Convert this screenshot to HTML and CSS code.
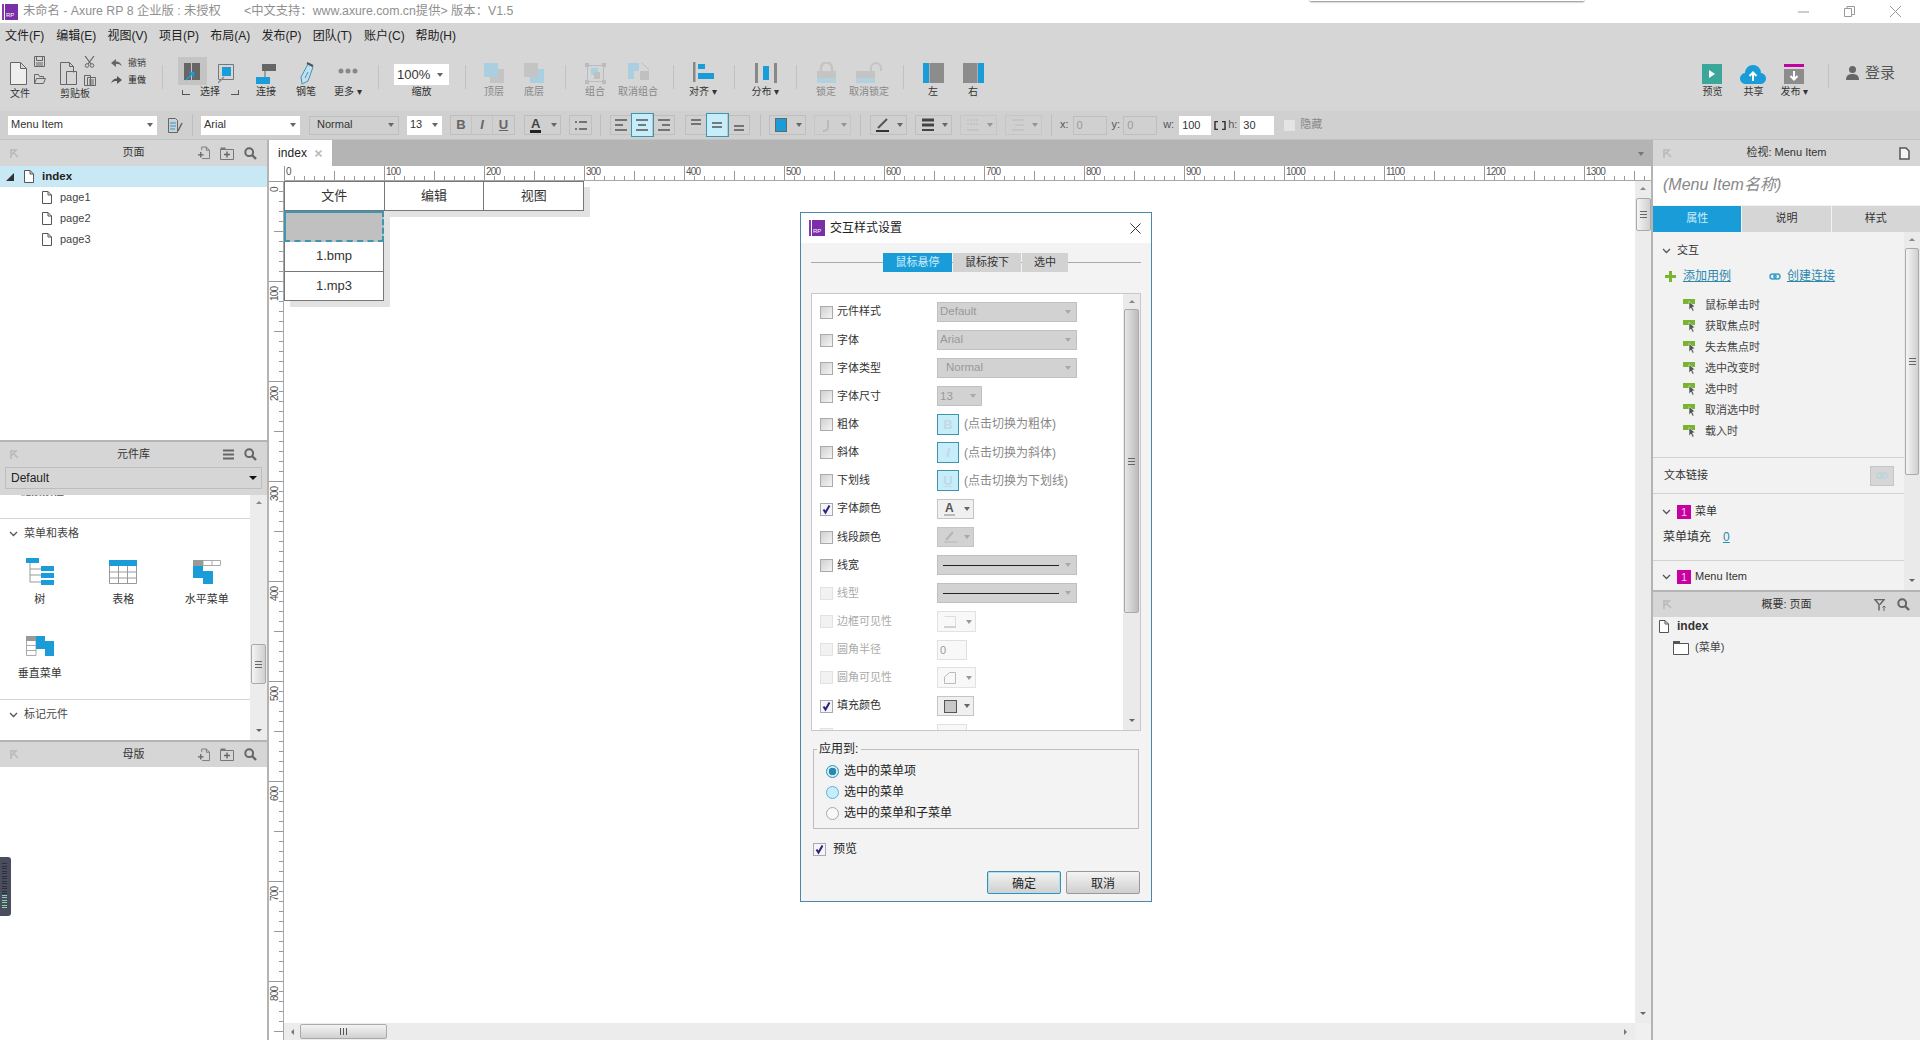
FILE: index.html
```html
<!DOCTYPE html>
<html lang="zh">
<head>
<meta charset="utf-8">
<title>Axure RP 8</title>
<link rel="stylesheet" href="styles.css">
</head>
<body>
<svg class="defs" width="0" height="0">
  <symbol id="page" viewBox="0 0 10 13"><path d="M.5.5h5.5l3.500 3.500v8.500h-9z M6 .5v3.500h3.500" fill="#fff" stroke="#555"/></symbol>
  <symbol id="search" viewBox="0 0 13 13"><circle cx="5.200" cy="5.200" r="3.900" fill="none" stroke="#666" stroke-width="2"/><path d="M8 8l4 4" stroke="#666" stroke-width="2.400"/></symbol>
  <symbol id="addpage" viewBox="0 0 13 14"><path d="M4 4V.5h5l3.500 3.500v9h-8" fill="none" stroke="#777"/><path d="M9 .5V4h3.500" fill="none" stroke="#777"/><path d="M0 9h6M3 6v6" stroke="#666" stroke-width="1.400"/></symbol>
  <symbol id="addfolder" viewBox="0 0 14 13"><path d="M.5 2.500h13v10H.5z" fill="none" stroke="#777"/><path d="M.5.500h5v2h-5z" fill="#777"/><path d="M4 7.500h6M7 4.500v6" stroke="#666" stroke-width="1.400"/></symbol>
  <symbol id="back" viewBox="0 0 9 9"><path d="M1 0v9M1 1h5L1 6M3 3l5 5" fill="none" stroke="#bbb" stroke-width="1.700"/></symbol>
  <symbol id="chev" viewBox="0 0 9 6"><path d="M1 1l3.500 3.500L8 1" fill="none" stroke="#555" stroke-width="1.300"/></symbol>
  <symbol id="flag" viewBox="0 0 13 13"><path d="M0 0h12v5H0z" fill="#79b530"/><path d="M0 0h4l2 3z" fill="#79b530"/><path d="M6 2.500l6 5-2.500.5 1.500 3.500-1.500.8L8 9l-2 2z" fill="#555" stroke="#f2f2f2" stroke-width=".6"/></symbol>
  <symbol id="tick" viewBox="0 0 11 11"><path d="M2.500 5.500l2 3 4-7" fill="none" stroke="#2b2470" stroke-width="2"/></symbol>
  <symbol id="rp" viewBox="0 0 16 16"><rect x="0" width="2" height="16" fill="#8a3ab0"/><rect x="3" width="13" height="16" fill="#7a2fa6"/><text x="4" y="13" font-size="6" fill="#fff" font-family="Liberation Sans">RP</text></symbol>
</svg>

<div class="app">
  <header class="titlebar">
    <svg class="title-logo" width="16" height="16"><use href="#rp"/></svg>
    <span class="title-a">未命名 - Axure RP 8 企业版 : 未授权</span>
    <span class="title-b">&lt;中文支持：www.axure.com.cn提供&gt; 版本：V1.5</span>
    <div class="winbtns">
      <svg width="11" height="11" viewBox="0 0 11 11"><path d="M0 6h11" stroke="#999"/></svg>
      <svg width="11" height="11" viewBox="0 0 11 11"><path d="M.5 2.500h7v8h-7zM3 2.500V.5h7.500v8H8" fill="none" stroke="#999"/></svg>
      <svg width="11" height="11" viewBox="0 0 11 11"><path d="M0 0l11 11M11 0L0 11" stroke="#999"/></svg>
    </div>
  </header>

  <nav class="menubar">
    <span>文件(F)</span><span>编辑(E)</span><span>视图(V)</span><span>项目(P)</span><span>布局(A)</span><span>发布(P)</span><span>团队(T)</span><span>账户(C)</span><span>帮助(H)</span>
  </nav>

  <div class="toolbar">
    <div class="tg tg-file">
      <div class="tg-icons">
        <svg width="17" height="23" viewBox="0 0 17 23"><path d="M.5.5h10l6 6v16H.5z M10.500.5v6h6" fill="#eee" stroke="#666"/></svg>
        <div class="tg-stack">
          <svg width="11" height="11" viewBox="0 0 11 11"><path d="M.5.5h10v10H.5z" fill="none" stroke="#666"/><path d="M2.500.5h6v4h-6zM2 7h7M2 9h7" fill="none" stroke="#666"/></svg>
          <svg width="12" height="10" viewBox="0 0 12 10"><path d="M.5 9.500V.5h4l1 2h4v2M.5 9.500l2-5h9l-2 5z" fill="none" stroke="#666"/></svg>
        </div>
      </div>
      <div class="tlabel tlabel-left">文件</div>
    </div>
    <div class="tg tg-clip">
      <div class="tg-icons">
        <svg width="17" height="23" viewBox="0 0 17 23"><path d="M.5.5h9l4 4v6M.5.5v22h6" fill="none" stroke="#666"/><path d="M9.500.5v4h4M6.500 9.500h10v13h-10z" fill="none" stroke="#666"/></svg>
        <div class="tg-stack tg-stack-clip">
          <svg width="11" height="12" viewBox="0 0 11 12"><path d="M1 0l6 8M10 0L4 8" stroke="#666" stroke-width="1.200"/><circle cx="3" cy="9.500" r="1.800" fill="none" stroke="#666"/><circle cx="8" cy="9.500" r="1.800" fill="none" stroke="#666"/></svg>
          <svg width="12" height="11" viewBox="0 0 12 11"><path d="M.5.5h6v10h-6zM3.500 2.500h8v8h-8zM5 5h5M5 7h5M5 9h5" fill="#d6d6d6" stroke="#666"/></svg>
        </div>
      </div>
      <div class="tlabel tlabel-left">剪贴板</div>
    </div>
    <div class="undo">
      <div class="undo-row"><svg width="11" height="9" viewBox="0 0 11 9"><path d="M0 4l5-4v2.500c3 0 5 1.500 6 5-1.500-2-3-2.500-6-2.500V8z" fill="#666"/></svg><span>撤销</span></div>
      <div class="undo-row"><svg width="11" height="9" viewBox="0 0 11 9"><path d="M11 4L6 0v2.500c-3 0-5 1.500-6 5 1.500-2 3-2.500 6-2.500V8z" fill="#555"/></svg><span class="undo-on">重做</span></div>
    </div>
    <i class="sep sep-a"></i>
    <div class="tool-select">
      <div class="sel-icons">
        <span class="sel-on"><svg width="17" height="20" viewBox="0 0 17 20"><path d="M0 0h7v17H0zM8 0h8v17H8z" fill="#666"/><path d="M2 17l7-7M5 9.500h4.500V14" fill="none" stroke="#1a9cd8" stroke-width="1.500"/></svg></span>
        <svg class="sel-two" width="17" height="20" viewBox="0 0 17 20"><path d="M.5.5h15v15H.5z" fill="#d6d6d6" stroke="#777"/><path d="M4 3h9v9H4z" fill="#1a9cd8"/><path d="M0 19l6-6" stroke="#888" stroke-width="1.500"/></svg>
      </div>
      <div class="sel-label"><i class="br-l"></i><span>选择</span><i class="br-r"></i></div>
    </div>
    <div class="tool tool-connect">
      <svg class="ticon" width="20" height="24" viewBox="0 0 20 24"><path d="M6 2h14v7H6z" fill="#666"/><path d="M0 15h14v7H0z" fill="#1a9cd8"/><path d="M9 9v6" stroke="#666"/></svg>
      <div class="tlabel">连接</div>
    </div>
    <div class="tool">
      <svg class="ticon" width="16" height="24" viewBox="0 0 16 24"><path d="M10 2l5 3-5 14-6 3-1-7z" fill="#bfe2f2" stroke="#4a90b0"/><path d="M7 16l3-6" stroke="#4a90b0"/><path d="M9 1l6 3" stroke="#555" stroke-width="2"/></svg>
      <div class="tlabel">钢笔</div>
    </div>
    <div class="tool tool-more">
      <svg class="ticon" width="20" height="24" viewBox="0 0 20 24"><circle cx="3" cy="9" r="2.500" fill="#888"/><circle cx="10" cy="9" r="2.500" fill="#888"/><circle cx="17" cy="9" r="2.500" fill="#888"/></svg>
      <div class="tlabel">更多 ▾</div>
    </div>
    <i class="sep sep-b"></i>
    <div class="tool tool-zoom">
      <div class="zoombox"><span>100%</span><i class="caret"></i></div>
      <div class="tlabel">缩放</div>
    </div>
    <i class="sep sep-c"></i>
    <div class="tool tool-off">
      <svg class="ticon" width="20" height="24" viewBox="0 0 20 24"><path d="M6 7h14v14H6z" fill="#c4c4c4"/><path d="M0 1h14v14H0z" fill="#a9cfe0"/></svg>
      <div class="tlabel">顶层</div>
    </div>
    <div class="tool tool-off">
      <svg class="ticon" width="20" height="24" viewBox="0 0 20 24"><path d="M6 7h14v14H6z" fill="#a9cfe0"/><path d="M0 1h14v14H0z" fill="#c4c4c4"/></svg>
      <div class="tlabel">底层</div>
    </div>
    <i class="sep"></i>
    <div class="tool tool-off">
      <svg class="ticon" width="21" height="24" viewBox="0 0 21 24"><path d="M2.500 3.500h16v16h-16z" fill="none" stroke="#bbb"/><path d="M0 1h4v4H0zM17 1h4v4h-4zM0 18h4v4H0zM17 18h4v4h-4z" fill="#bbb"/><path d="M6 6h7v7H6z" fill="#a9cfe0"/><path d="M9 10h6v7H9z" fill="#c0c0c0"/></svg>
      <div class="tlabel">组合</div>
    </div>
    <div class="tool tool-wide tool-off">
      <svg class="ticon" width="21" height="24" viewBox="0 0 21 24"><path d="M0 1h11v8H6v8H0z" fill="#a9cfe0"/><path d="M12 9h9v9h-9z" fill="#c0c0c0"/><path d="M14 1l7 7" stroke="#bbb"/></svg>
      <div class="tlabel">取消组合</div>
    </div>
    <i class="sep sep-d"></i>
    <div class="tool">
      <svg class="ticon" width="21" height="24" viewBox="0 0 21 24"><path d="M0 0h2.500v20H0z" fill="#888"/><path d="M5 2h7v5H5z" fill="#1a9cd8"/><path d="M5 11h16v6H5z" fill="#1a9cd8"/></svg>
      <div class="tlabel">对齐 ▾</div>
    </div>
    <i class="sep"></i>
    <div class="tool tool-dist">
      <svg class="ticon" width="22" height="24" viewBox="0 0 22 24"><path d="M0 1h3v20H0zM19 1h3v20h-3z" fill="#888"/><path d="M8 4h6v14H8z" fill="#1a9cd8"/></svg>
      <div class="tlabel">分布 ▾</div>
    </div>
    <i class="sep"></i>
    <div class="tool tool-off">
      <svg class="ticon" width="19" height="24" viewBox="0 0 19 24"><path d="M4 9V6a5.500 5.500 0 0 1 11 0v3" fill="none" stroke="#c4c4c4" stroke-width="2.500"/><path d="M0 9h19v7H0z" fill="#c4c4c4"/><path d="M0 16h19v5H0z" fill="#b3d0dd"/></svg>
      <div class="tlabel">锁定</div>
    </div>
    <div class="tool tool-wide tool-off">
      <svg class="ticon" width="26" height="24" viewBox="0 0 26 24"><path d="M15 9V6a5 5 0 0 1 10 0v3" fill="none" stroke="#c4c4c4" stroke-width="2"/><path d="M0 9h19v7H0z" fill="#c4c4c4"/><path d="M0 16h19v5H0z" fill="#b3d0dd"/></svg>
      <div class="tlabel">取消锁定</div>
    </div>
    <i class="sep"></i>
    <div class="tool">
      <svg class="ticon" width="21" height="24" viewBox="0 0 21 24"><path d="M0 1h6v20H0z" fill="#1a9cd8"/><path d="M6.500 1H21v20H6.500z" fill="#8c8c8c"/></svg>
      <div class="tlabel">左</div>
    </div>
    <div class="tool">
      <svg class="ticon" width="21" height="24" viewBox="0 0 21 24"><path d="M15 1h6v20h-6z" fill="#1a9cd8"/><path d="M0 1h14.500v20H0z" fill="#8c8c8c"/></svg>
      <div class="tlabel">右</div>
    </div>
    <div class="tb-right">
      <div class="tool">
        <svg class="ticon" width="20" height="24" viewBox="0 0 20 24"><path d="M0 2h20v20H0z" fill="#3aa79a"/><path d="M7 8l6 4-6 4z" fill="#fff"/></svg>
        <div class="tlabel">预览</div>
      </div>
      <div class="tool">
        <svg class="ticon" width="26" height="24" viewBox="0 0 26 24"><path d="M6 22a5.500 5.500 0 0 1-1-11 8 8 0 0 1 16 0 5.500 5.500 0 0 1-1 11z" fill="#1a9cd8"/><path d="M13 19v-8M9.500 14l3.500-3.500 3.500 3.500" fill="none" stroke="#fff" stroke-width="2"/></svg>
        <div class="tlabel">共享</div>
      </div>
      <div class="tool">
        <svg class="ticon" width="20" height="24" viewBox="0 0 20 24"><path d="M0 2h20v3H0z" fill="#c300a0"/><path d="M0 7h20v15H0z" fill="#8c8c8c"/><path d="M10 9v8M6.500 14l3.500 3.500 3.500-3.500" fill="none" stroke="#fff" stroke-width="2"/></svg>
        <div class="tlabel">发布 ▾</div>
      </div>
      <i class="sep sep-e"></i>
      <div class="login">
        <svg width="13" height="14" viewBox="0 0 13 14"><circle cx="6.500" cy="3.500" r="3.500" fill="#666"/><path d="M0 14c0-4 2-6 6.500-6s6.500 2 6.500 6z" fill="#666"/></svg>
        <span>登录</span>
      </div>
    </div>
  </div>

  <div class="formatbar">
    <div class="fld f-name"><span>Menu Item</span><i class="caret"></i></div>
    <svg class="f-paint" width="15" height="15" viewBox="0 0 15 15"><path d="M.5.5h7l2 2v12h-9z" fill="none" stroke="#666"/><path d="M2 5h6M2 8h6M2 11h5" stroke="#1a9cd8"/><path d="M10 13l4-8" stroke="#666" stroke-width="1.500"/></svg>
    <i class="fsep f-s1"></i>
    <div class="fld f-font"><span>Arial</span><i class="caret"></i></div>
    <div class="fld fld-off f-type"><span>Normal</span><i class="caret"></i></div>
    <div class="fld f-size"><span>13</span><i class="caret"></i></div>
    <div class="bgroup f-biu"><b class="fb">B</b><em class="fb fb-i">I</em><u class="fb fb-u">U</u></div>
    <div class="fb-drop f-color"><span class="a-under">A</span><i class="caret"></i></div>
    <div class="bgroup f-list"><span class="fb"><svg width="12" height="9" viewBox="0 0 12 9"><path d="M0 1h2M4 1h8M0 8h2M4 8h8" stroke="#555" stroke-width="1.600"/></svg></span></div>
    <i class="fsep f-s2"></i>
    <div class="bgroup f-align">
      <span class="fb"><svg width="12" height="12" viewBox="0 0 12 12"><path d="M0 1h12M0 6h8M0 11h12" stroke="#555" stroke-width="1.500"/></svg></span>
      <span class="fb fb-on"><svg width="12" height="12" viewBox="0 0 12 12"><path d="M0 1h12M2 6h8M0 11h12" stroke="#555" stroke-width="1.500"/></svg></span>
      <span class="fb"><svg width="12" height="12" viewBox="0 0 12 12"><path d="M0 1h12M4 6h8M0 11h12" stroke="#555" stroke-width="1.500"/></svg></span>
    </div>
    <div class="bgroup f-valign">
      <span class="fb"><svg width="12" height="12" viewBox="0 0 12 12"><path d="M1 1h10M1 5h10" stroke="#555" stroke-width="1.500"/></svg></span>
      <span class="fb fb-on"><svg width="12" height="12" viewBox="0 0 12 12"><path d="M1 4h10M1 8h10" stroke="#555" stroke-width="1.500"/></svg></span>
      <span class="fb"><svg width="12" height="12" viewBox="0 0 12 12"><path d="M1 7h10M1 11h10" stroke="#555" stroke-width="1.500"/></svg></span>
    </div>
    <i class="fsep f-s3"></i>
    <div class="fb-drop f-fill"><span class="swatch"></span><i class="caret"></i></div>
    <div class="fb-drop fb-dim f-next"><svg width="12" height="13" viewBox="0 0 12 13"><path d="M8 1v7c0 3-2 4-5 4" fill="none" stroke="#aaa" stroke-width="2"/></svg><i class="caret"></i></div>
    <i class="fsep"></i>
    <div class="fb-drop f-line"><svg width="14" height="14" viewBox="0 0 14 14"><path d="M2 10L11 1" stroke="#555" stroke-width="2"/><path d="M0 13h13" stroke="#333" stroke-width="2"/></svg><i class="caret"></i></div>
    <div class="fb-drop f-next"><svg width="14" height="14" viewBox="0 0 14 14"><path d="M1 2h12M1 7h12" stroke="#444" stroke-width="3"/><path d="M1 12h12" stroke="#444" stroke-width="2"/></svg><i class="caret"></i></div>
    <div class="fb-drop fb-dim f-next"><svg width="14" height="14" viewBox="0 0 14 14"><path d="M1 2h12M1 6h12" stroke="#aaa" stroke-dasharray="2 1"/><path d="M1 12h12" stroke="#aaa"/></svg><i class="caret"></i></div>
    <div class="fb-drop fb-dim f-next"><svg width="14" height="14" viewBox="0 0 14 14"><path d="M1 2h12M4 7h9M1 12h12" stroke="#aaa"/></svg><i class="caret"></i></div>
    <i class="fsep f-s4"></i>
    <span class="coord c-x">x:</span><span class="cin cin-off c-xv">0</span>
    <span class="coord c-y">y:</span><span class="cin cin-off c-yv">0</span>
    <span class="coord c-w">w:</span><span class="cin c-wv">100</span>
    <svg class="c-lock" width="12" height="9" viewBox="0 0 12 9"><path d="M4 .5H1v8h3M8 .5h3v8H8" fill="none" stroke="#333" stroke-width="1.500"/></svg>
    <span class="coord c-h">h:</span><span class="cin c-hv">30</span>
    <i class="hide-box"></i><span class="hide-text">隐藏</span>
  </div>

  <div class="main">
    <aside class="left">
      <section class="p-pages">
        <div class="phead">
          <svg class="pback" width="9" height="9"><use href="#back"/></svg>
          <span class="ptitle">页面</span>
          <div class="picons">
            <svg width="12" height="14"><use href="#addpage"/></svg>
            <svg width="14" height="13"><use href="#addfolder"/></svg>
            <svg width="13" height="13"><use href="#search"/></svg>
          </div>
        </div>
        <div class="tree">
          <div class="tree-row tree-sel"><i class="tri"></i><svg width="10" height="13"><use href="#page"/></svg><b>index</b></div>
          <div class="tree-row tree-sub"><svg width="10" height="13"><use href="#page"/></svg><span>page1</span></div>
          <div class="tree-row tree-sub"><svg width="10" height="13"><use href="#page"/></svg><span>page2</span></div>
          <div class="tree-row tree-sub"><svg width="10" height="13"><use href="#page"/></svg><span>page3</span></div>
        </div>
      </section>
      <section class="p-lib">
        <div class="phead phead-lib">
          <svg class="pback" width="9" height="9"><use href="#back"/></svg>
          <span class="ptitle">元件库</span>
          <div class="picons">
            <svg width="11" height="11" viewBox="0 0 11 11"><path d="M0 1.500h11M0 5.500h11M0 9.500h11" stroke="#666" stroke-width="2"/></svg>
            <svg width="13" height="13"><use href="#search"/></svg>
          </div>
        </div>
        <div class="lib-select"><div class="lib-drop"><span>Default</span><i class="caret caret-dark"></i></div></div>
        <div class="lib-body">
          <div class="lib-list">
            <div class="lib-clip"><span>链接按钮</span></div>
            <div class="lib-head"><svg width="9" height="6"><use href="#chev"/></svg><span>菜单和表格</span></div>
            <div class="lib-grid">
              <div class="lib-item">
                <svg width="28" height="28" viewBox="0 0 28 28"><path d="M4 5v19h11M4 11h11M4 17h11" fill="none" stroke="#999"/><path d="M0 0h13v5H0zM15 8h13v5H15zM15 15h13v5H15zM15 22h13v5H15z" fill="#1a9cd8"/></svg>
                <span>树</span>
              </div>
              <div class="lib-item">
                <svg width="28" height="24" viewBox="0 0 28 24"><path d="M.5.5h27v23H.5zM.5 12h27M.5 18h27M9.500 6v18M18.500 6v18" fill="#fff" stroke="#999"/><path d="M0 0h28v6H0z" fill="#1a9cd8"/></svg>
                <span>表格</span>
              </div>
              <div class="lib-item">
                <svg width="28" height="24" viewBox="0 0 28 24"><path d="M10 .5h17.500v5H10zM19 .5v5" fill="#fff" stroke="#aaa"/><path d="M0 0h10v6H0z" fill="#999"/><path d="M0 6h10v5h10v13H10V18H0z" fill="#1a9cd8"/></svg>
                <span>水平菜单</span>
              </div>
              <div class="lib-item">
                <svg width="28" height="20" viewBox="0 0 28 20"><path d="M.5.5h9.500v19H.5zM.5 9.500h9.500M.5 14.500h9.500" fill="#fff" stroke="#aaa"/><path d="M0 0h10v5H0z" fill="#999"/><path d="M10 0h9v5h9v15H19v-7H10z" fill="#1a9cd8"/></svg>
                <span>垂直菜单</span>
              </div>
            </div>
            <div class="lib-head lib-head-b"><svg width="9" height="6"><use href="#chev"/></svg><span>标记元件</span></div>
          </div>
          <div class="vs vs-lib"><i class="ar-up"></i><i class="vs-thumb"></i><i class="ar-down"></i></div>
        </div>
      </section>
      <section class="p-master">
        <div class="phead">
          <svg class="pback" width="9" height="9"><use href="#back"/></svg>
          <span class="ptitle">母版</span>
          <div class="picons">
            <svg width="12" height="14"><use href="#addpage"/></svg>
            <svg width="14" height="13"><use href="#addfolder"/></svg>
            <svg width="13" height="13"><use href="#search"/></svg>
          </div>
        </div>
      </section>
    </aside>

    <section class="center">
      <div class="tabstrip">
        <div class="tab"><span>index</span><svg width="7" height="7" viewBox="0 0 7 7"><path d="M.5.5l6 6M6.500.5l-6 6" stroke="#bbb" stroke-width="1.600"/></svg></div>
        <i class="caret tab-caret"></i>
      </div>
      <div class="hruler-wrap">
        <div class="hruler"><span>0</span><span>100</span><span>200</span><span>300</span><span>400</span><span>500</span><span>600</span><span>700</span><span>800</span><span>900</span><span>1000</span><span>1100</span><span>1200</span><span>1300</span></div>
      </div>
      <div class="work">
        <div class="vruler"><span>0</span><span>100</span><span>200</span><span>300</span><span>400</span><span>500</span><span>600</span><span>700</span><span>800</span></div>
        <div class="canvas">
          <div class="mw-top">
            <div class="mw-cell">文件</div><div class="mw-cell">编辑</div><div class="mw-cell">视图</div>
          </div>
          <div class="mw-sub">
            <div class="mw-selected"></div>
            <div class="mw-item">1.bmp</div>
            <div class="mw-item">1.mp3</div>
          </div>
        </div>
        <div class="vs vs-canvas"><i class="ar-up"></i><i class="vs-thumb"></i><i class="ar-down"></i></div>
        <div class="hs"><i class="ar-left"></i><i class="hs-thumb"></i><i class="ar-right"></i></div>
        <div class="corner"></div>
      </div>
    </section>

    <aside class="right">
      <div class="phead">
        <svg class="pback" width="9" height="9"><use href="#back"/></svg>
        <span class="ptitle">检视: Menu Item</span>
        <div class="picons"><svg width="11" height="13" viewBox="0 0 11 13"><path d="M1 1h6l3 3v8H1z" fill="#f4f4f4" stroke="#555" stroke-width="1.500"/></svg></div>
      </div>
      <div class="rname">(Menu Item名称)</div>
      <div class="rtabs"><span class="rtab-on">属性</span><span>说明</span><span>样式</span></div>
      <div class="rbody">
        <div class="rlist">
          <div class="rsec rsec-int">
            <div class="rhead"><svg width="9" height="6"><use href="#chev"/></svg><span>交互</span></div>
            <div class="rlinks">
              <svg width="11" height="11" viewBox="0 0 11 11"><path d="M4 0h3v4h4v3H7v4H4V7H0V4h4z" fill="#79b530"/></svg>
              <a class="rlink">添加用例</a>
              <svg class="rl-icon" width="12" height="7" viewBox="0 0 12 7"><rect x="1" y="1" width="6" height="5" rx="2.500" fill="none" stroke="#3b9fc5" stroke-width="1.500"/><rect x="5" y="1" width="6" height="5" rx="2.500" fill="none" stroke="#3b9fc5" stroke-width="1.500"/></svg>
              <a class="rlink">创建连接</a>
            </div>
            <ul class="events">
              <li><svg width="13" height="13"><use href="#flag"/></svg>鼠标单击时</li>
              <li><svg width="13" height="13"><use href="#flag"/></svg>获取焦点时</li>
              <li><svg width="13" height="13"><use href="#flag"/></svg>失去焦点时</li>
              <li><svg width="13" height="13"><use href="#flag"/></svg>选中改变时</li>
              <li><svg width="13" height="13"><use href="#flag"/></svg>选中时</li>
              <li><svg width="13" height="13"><use href="#flag"/></svg>取消选中时</li>
              <li><svg width="13" height="13"><use href="#flag"/></svg>载入时</li>
            </ul>
          </div>
          <div class="rsec rsec-link"><span>文本链接</span><span class="linkbtn"><svg width="12" height="7" viewBox="0 0 12 7"><rect x="1" y="1" width="6" height="5" rx="2.500" fill="none" stroke="#bcd4dd" stroke-width="1.500"/><rect x="5" y="1" width="6" height="5" rx="2.500" fill="none" stroke="#bcd4dd" stroke-width="1.500"/></svg></span></div>
          <div class="rsec rsec-menu">
            <div class="rhead"><svg width="9" height="6"><use href="#chev"/></svg><i class="badge">1</i><span>菜单</span></div>
            <div class="rpad"><span>菜单填充</span><a class="rlink rzero">0</a></div>
          </div>
          <div class="rsec rsec-item">
            <div class="rhead"><svg width="9" height="6"><use href="#chev"/></svg><i class="badge">1</i><span>Menu Item</span></div>
          </div>
        </div>
        <div class="vs vs-right"><i class="ar-up"></i><i class="vs-thumb"></i><i class="ar-down"></i></div>
      </div>
      <div class="phead phead-out">
        <svg class="pback" width="9" height="9"><use href="#back"/></svg>
        <span class="ptitle">概要: 页面</span>
        <div class="picons">
          <svg width="13" height="12" viewBox="0 0 13 12"><path d="M0 .5h11M1 .5l4 5v6M10 .5l-4 5" fill="none" stroke="#666" stroke-width="1.500"/><path d="M10 12V7M8.500 8.500L10 7l1.500 1.500" fill="none" stroke="#666"/></svg>
          <svg width="13" height="13"><use href="#search"/></svg>
        </div>
      </div>
      <div class="outline">
        <div class="out-row"><svg width="10" height="13"><use href="#page"/></svg><b>index</b></div>
        <div class="out-row out-sub"><svg width="16" height="14" viewBox="0 0 16 14"><path d="M.5 2.500h15v11H.5z" fill="#fff" stroke="#555"/><path d="M0 0h7v3H0z" fill="#555"/></svg><span>(菜单)</span></div>
      </div>
    </aside>
  </div>
</div>

<div class="topstrip"></div>

<div class="widget"><i class="w-dark"></i><i class="w-green"></i></div>

<div class="dialog">
  <div class="dtitle">
    <svg width="16" height="16"><use href="#rp"/></svg>
    <span>交互样式设置</span>
    <svg class="dclose" width="11" height="11" viewBox="0 0 11 11"><path d="M.5.5l10 10M10.500.5l-10 10" stroke="#333"/></svg>
  </div>
  <div class="dbody">
    <div class="dtabs"><span class="dt-1">鼠标悬停</span><span class="dt-2">鼠标按下</span><span class="dt-3">选中</span></div>
    <div class="dlist">
      <div class="drows">
        <div class="drow"><i class="cb"></i><label>元件样式</label><div class="dsel"><span>Default</span><i class="caret caret-light"></i></div></div>
        <div class="drow"><i class="cb"></i><label>字体</label><div class="dsel"><span>Arial</span><i class="caret caret-light"></i></div></div>
        <div class="drow"><i class="cb"></i><label>字体类型</label><div class="dsel"><span class="dsel-in">Normal</span><i class="caret caret-light"></i></div></div>
        <div class="drow"><i class="cb"></i><label>字体尺寸</label><div class="dsel dsel-s"><span>13</span><i class="caret caret-light"></i></div></div>
        <div class="drow"><i class="cb"></i><label>粗体</label><b class="dtog">B</b><span class="hint">(点击切换为粗体)</span></div>
        <div class="drow"><i class="cb"></i><label>斜体</label><em class="dtog dtog-i">I</em><span class="hint">(点击切换为斜体)</span></div>
        <div class="drow"><i class="cb"></i><label>下划线</label><u class="dtog">U</u><span class="hint">(点击切换为下划线)</span></div>
        <div class="drow"><i class="cb cb-on"><svg width="11" height="11"><use href="#tick"/></svg></i><label>字体颜色</label><div class="dcol"><span class="a-under a-small">A</span><i class="caret"></i></div></div>
        <div class="drow"><i class="cb"></i><label>线段颜色</label><div class="dcol dcol-off"><svg width="14" height="12" viewBox="0 0 14 12"><path d="M2 9l7-8" stroke="#b5b5b5" stroke-width="2"/><path d="M0 11h13" stroke="#b5b5b5"/></svg><i class="caret caret-light"></i></div></div>
        <div class="drow"><i class="cb"></i><label>线宽</label><div class="dsel dsel-line"><i class="ln"></i><i class="caret caret-light"></i></div></div>
        <div class="drow drow-off"><i class="cb"></i><label>线型</label><div class="dsel dsel-line dsel-on"><i class="ln"></i><i class="caret caret-light"></i></div></div>
        <div class="drow drow-off"><i class="cb"></i><label>边框可见性</label><div class="dcol dcol-pale"><svg width="12" height="12" viewBox="0 0 12 12"><path d="M0 11h12" stroke="#aaa"/><path d="M.5.5h11v10" fill="none" stroke="#ddd"/></svg><i class="caret"></i></div></div>
        <div class="drow drow-off"><i class="cb"></i><label>圆角半径</label><span class="dinput">0</span></div>
        <div class="drow drow-off"><i class="cb"></i><label>圆角可见性</label><div class="dcol dcol-pale"><svg width="12" height="12" viewBox="0 0 12 12"><path d="M.5 11.500V5l5-4.500h6v11z" fill="none" stroke="#bbb"/></svg><i class="caret"></i></div></div>
        <div class="drow drow-on"><i class="cb cb-on"><svg width="11" height="11"><use href="#tick"/></svg></i><label>填充颜色</label><div class="dcol"><span class="dswatch"></span><i class="caret"></i></div></div>
        <div class="drow drow-off"><i class="cb"></i><label></label><span class="dinput"></span></div>
      </div>
      <div class="vs vs-dialog"><i class="ar-up"></i><i class="vs-thumb"></i><i class="ar-down"></i></div>
    </div>
    <fieldset class="apply">
      <legend>应用到:</legend>
      <div class="radio"><i class="rd rd-on"></i><span>选中的菜单项</span></div>
      <div class="radio"><i class="rd rd-hover"></i><span>选中的菜单</span></div>
      <div class="radio"><i class="rd"></i><span>选中的菜单和子菜单</span></div>
    </fieldset>
    <div class="preview"><i class="cb cb-on"><svg width="11" height="11"><use href="#tick"/></svg></i><span>预览</span></div>
    <div class="dbtns"><button class="btn btn-on">确定</button><button class="btn">取消</button></div>
  </div>
</div>
</body>
</html>
```

FILE: styles.css
```css
* { box-sizing: border-box; }
html, body { margin: 0; padding: 0; }
body {
  width: 1920px; height: 1040px; overflow: hidden; position: relative;
  font: 12px/1.2 "Liberation Sans", "Noto Sans CJK SC", sans-serif;
  color: #333; background: #fff;
}
i, em { font-style: normal; }
svg { display: block; flex: none; }
.defs { position: absolute; }
.app { display: flex; flex-direction: column; height: 1040px; }

/* title bar */
.titlebar { height: 23px; flex: none; display: flex; align-items: center; background: #fff; padding-left: 2px; color: #8f8f8f; }
.title-a { margin-left: 5px; width: 221px; font-size: 12.300px; white-space: nowrap; }
.title-b { font-size: 12.300px; white-space: nowrap; }
.winbtns { margin-left: auto; display: flex; gap: 35px; padding-right: 19px; }

/* menu */
.menubar { height: 27px; flex: none; background: #d6d6d6; display: flex; align-items: center; padding-left: 5px; color: #222; }
.menubar span { width: 51.300px; white-space: nowrap; }

/* toolbar */
.toolbar { height: 61px; flex: none; background: #d6d6d6; display: flex; padding: 12px 0 0 10px; align-items: flex-start; }
.tool { width: 40px; flex: none; display: flex; flex-direction: column; align-items: center; }
.tool-wide { width: 46px; }
.tlabel { height: 12px; line-height: 12px; font-size: 10px; color: #333; white-space: nowrap; text-align: center; }
.tool-off .tlabel { color: #888; }
.tg { flex: none; position: relative; }
.tg-file { width: 35px; }
.tg-clip { width: 36px; margin-left: 15px; }
.tg-icons { display: flex; height: 24px; align-items: flex-start; }
.tlabel-left { text-align: left; margin-top: 2px; }
.tg-stack { display: flex; flex-direction: column; gap: 7px; margin: -6px 0 0 7px; }
.undo { width: 35px; flex: none; margin-left: 15px; display: flex; flex-direction: column; gap: 5px; margin-top: -5px; }
.undo-row { display: flex; align-items: center; gap: 6px; font-size: 9px; height: 12px; color: #444; white-space: nowrap; }
.undo-on { color: #222; }
.sep { width: 1px; height: 24px; background: #c2c2c2; flex: none; margin: 3px 9px 0 11px; }
.sep-a { margin: 3px 15px 0 16px; }
.sep-b { margin: 3px 15px 0 8px; }
.sep-c { margin: 3px 8px 0 16px; }
.sep-d { margin: 3px 9px 0 12px; }
.sep-e { margin: 2px 17px 0 13px; }
.tool-select { width: 60px; flex: none; }
.sel-icons { height: 24px; display: flex; align-items: flex-start; }
.sel-on { width: 29px; height: 28px; background: #c4c4c4; margin-top: -5px; flex: none; display: flex; justify-content: center; padding-top: 6px; }
.sel-two { margin-left: 11px; margin-top: 2px; }
.sel-label { display: flex; align-items: center; height: 12px; font-size: 10px; padding-left: 4px; white-space: nowrap; }
.sel-label span { margin: 0 11px 0 10px; flex: none; }
.br-l, .br-r { width: 8px; height: 5px; border-bottom: 1px solid #555; display: block; flex: none; }
.br-l { border-left: 1px solid #555; }
.br-r { border-right: 1px solid #555; }
.tool-connect { margin-left: 8px; }
.tool-more { width: 44px; }
.tool-zoom { width: 55px; }
.zoombox { width: 55px; height: 21px; margin: 2px 0 1px; background: #fff; display: flex; align-items: center; justify-content: space-between; padding: 0 6px 0 3px; font-size: 13px; color: #333; }
.tool-dist { margin-left: 2px; width: 39px; }
.tb-right { margin-left: auto; display: flex; align-items: flex-start; padding-right: 25px; }
.tb-right .tool { width: 41px; }
.login { display: flex; align-items: center; gap: 6px; margin-top: 2px; font-size: 15px; color: #555; }

.caret { width: 0; height: 0; border-style: solid; border-width: 4px 3.500px 0; border-color: #666 transparent transparent; display: block; flex: none; }
.caret-dark { border-color: #111 transparent transparent; border-width: 4px 4px 0; }
.caret-light { border-color: #a8a8a8 transparent transparent; }

/* format bar */
.formatbar { height: 29px; flex: none; background: #d0d0d0; border-bottom: 1px solid #c2c2c2; display: flex; align-items: center; padding-left: 8px; font-size: 11px; color: #333; }
.fld { height: 19px; background: #fff; display: flex; align-items: center; justify-content: space-between; padding: 0 4px 0 3px; flex: none; white-space: nowrap; }
.fld-off { background: transparent; border: 1px solid #bfbfbf; }
.f-name { width: 149px; }
.f-paint { margin: 0 0 0 11px; }
.fsep { width: 1px; height: 22px; background: #bfbfbf; margin: 0 9px; flex: none; }
.f-s1 { margin: 0 8px 0 9px; }
.f-s2 { margin: 0 9px 0 8px; }
.f-s3 { margin: 0 8px 0 10px; }
.f-s4 { margin: 0 8px 0 9px; }
.f-font { width: 99px; }
.f-type { width: 90px; margin-left: 9px; padding-left: 7px; }
.f-size { width: 35px; margin-left: 8px; }
.bgroup { display: flex; flex: none; border: 1px solid #bfbfbf; height: 20px; }
.fb { width: 21px; height: 18px; display: flex; align-items: center; justify-content: center; border-right: 1px solid #c4c4c4; font-size: 13px; color: #666; text-decoration: none; flex: none; }
.fb:last-child { border-right: 0; }
.fb-i { font-style: italic; font-weight: bold; }
.fb-u { text-decoration: underline; font-weight: bold; }
.fb-on { background: #c7ecfa; outline: 1px solid #3e94ad; height: 22px; margin-top: -2px; z-index: 1; }
.f-biu { margin-left: 8px; }
.fb-drop { width: 37px; height: 20px; flex: none; border: 1px solid #bfbfbf; display: flex; align-items: center; justify-content: space-between; padding: 0 3px 0 5px; }
.a-under { font-weight: bold; font-size: 13px; line-height: 13px; border-bottom: 3px solid #222; color: #444; padding: 0 1px; }
.f-color { margin-left: 9px; }
.f-list { margin-left: 8px; }
.f-valign { margin-left: 10px; }
.f-next { margin-left: 8px; }
.swatch { width: 12px; height: 14px; background: #1a9cd8; border: 1px solid #666; }
.fb-dim { opacity: .55; }
.coord { color: #555; flex: none; }
.cin { height: 19px; width: 34px; background: #fff; padding: 3px 3px; flex: none; }
.cin-off { background: transparent; border: 1px solid #bfbfbf; color: #999; padding: 2px 3px; }
.c-xv { margin-left: 4px; }
.c-y { margin-left: 5px; }
.c-yv { margin-left: 3px; }
.c-w { margin-left: 6px; }
.c-wv { margin-left: 5px; width: 32px; }
.c-lock { margin: 0 2px 0 3px; }
.c-hv { margin-left: 3px; width: 34px; }
.hide-box { width: 11px; height: 11px; background: #e4e4e4; margin-left: 10px; flex: none; }
.hide-text { margin-left: 5px; color: #888; }

/* main */
.main { flex: 1; display: flex; min-height: 0; }
.left { width: 269px; flex: none; border-right: 2px solid #b4b4b4; display: flex; flex-direction: column; background: #fff; }
.phead { height: 26px; flex: none; background: #d6d6d6; display: grid; grid-template-columns: 1fr auto 1fr; align-items: center; padding: 0 10px; font-size: 11px; color: #333; }
.pback { justify-self: start; }
.ptitle { text-align: center; white-space: nowrap; }
.picons { justify-self: end; display: flex; align-items: center; gap: 10px; }
.p-pages { height: 302px; flex: none; border-bottom: 2px solid #b4b4b4; }
.tree { background: #fff; }
.tree-row { height: 21px; display: flex; align-items: center; font-size: 11px; color: #444; }
.tree-sel { background: #c9e8f5; padding-left: 6px; color: #222; }
.tree-sel b { margin-left: 8px; font-size: 11.500px; }
.tri { width: 0; height: 0; border-style: solid; border-width: 0 0 8px 8px; border-color: transparent transparent #333; margin-right: 10px; }
.tree-sub { padding-left: 42px; gap: 8px; }
.p-lib { height: 300px; flex: none; border-bottom: 2px solid #b4b4b4; display: flex; flex-direction: column; }
.phead-lib { height: 25px; }
.lib-select { height: 28px; flex: none; background: #d6d6d6; padding: 0 5px; }
.lib-drop { height: 22px; border: 1px solid #bdbdbd; display: flex; align-items: center; justify-content: space-between; padding: 0 4px 0 5px; color: #222; }
.lib-body { flex: 1; display: flex; min-height: 0; }
.lib-list { flex: 1; overflow: hidden; font-size: 11px; }
.lib-clip { height: 24px; border-bottom: 1px solid #d4d4d4; padding-left: 20px; overflow: hidden; }
.lib-clip span { display: block; margin-top: -10px; color: #555; }
.lib-head { height: 20px; margin-top: 5px; display: flex; align-items: center; gap: 6px; padding-left: 9px; color: #444; }
.lib-grid { display: grid; grid-template-columns: repeat(3, 83.500px); grid-auto-rows: 74px; height: 142px; margin: 14px 0 0 -2px; border-bottom: 1px solid #d4d4d4; }
.lib-item { display: flex; flex-direction: column; align-items: center; color: #333; }
.lib-item svg { height: 28px; }
.lib-item span { margin-top: 7px; line-height: 13px; }
.p-master { flex: 1; }
.p-master .phead { height: 25px; }

/* scrollbars */
.vs { width: 16px; flex: none; background: #ececec; display: flex; flex-direction: column; align-items: center; }
.ar-up, .ar-down, .ar-left, .ar-right { width: 0; height: 0; border-style: solid; flex: none; display: block; }
.ar-up { border-width: 0 3px 3px; border-color: transparent transparent #888; margin-top: 6px; }
.ar-down { border-width: 3px 3px 0; border-color: #666 transparent transparent; margin-top: auto; margin-bottom: 8px; }
.ar-left { border-width: 3px 3px 3px 0; border-color: transparent #777 transparent transparent; }
.ar-right { border-width: 3px 0 3px 3px; border-color: transparent transparent transparent #777; margin-left: auto; }
.vs-thumb { width: 15px; flex: none; border: 1px solid #aaa; border-radius: 2px; background: linear-gradient(90deg, #f4f4f4, #d0d0d0); display: flex; align-items: center; justify-content: center; }
.vs-thumb::after { content: ""; width: 7px; height: 7px; background: repeating-linear-gradient(180deg, #666 0 1px, transparent 1px 3px); }
.vs-canvas .vs-thumb { height: 33px; margin-top: 8px; }
.vs-canvas { grid-column: 3; grid-row: 1; width: 16px; }
.vs-lib { width: 17px; }
.vs-lib .vs-thumb { height: 40px; margin-top: 140px; }
.vs-right .vs-thumb { height: 227px; margin-top: 7px; width: 14px; }
.vs-right { background: #eaeaea; }
.vs-dialog { width: 17px; background: #eaeaea; }
.vs-dialog .vs-thumb { height: 304px; margin-top: 6px; background: linear-gradient(90deg, #e6e6e6, #bcbcbc); }
.hs { grid-column: 2; grid-row: 2; background: #ececec; display: flex; align-items: center; padding: 0 8px 0 7px; }
.hs-thumb { width: 87px; height: 15px; margin-left: 6px; flex: none; border: 1px solid #aaa; border-radius: 2px; background: linear-gradient(180deg, #f4f4f4, #d0d0d0); display: flex; align-items: center; justify-content: center; }
.hs-thumb::after { content: ""; width: 7px; height: 7px; background: repeating-linear-gradient(90deg, #555 0 1px, transparent 1px 3px); }
.corner { grid-column: 3; grid-row: 2; background: #f0f0f0; }

/* centre */
.center { flex: 1; display: flex; flex-direction: column; min-width: 0; background: #fff; }
.tabstrip { height: 26px; flex: none; background: #b4b4b4; display: flex; align-items: flex-end; }
.tab { width: 63px; height: 26px; background: #fff; display: flex; align-items: center; padding-left: 9px; gap: 8px; color: #222; letter-spacing: .1px; }
.tab-caret { margin: 0 7px 10px auto; border-top-color: #777; }
.hruler-wrap { height: 15px; flex: none; padding-left: 15px; background: #fff; overflow: hidden; }
.hruler { height: 15px; display: flex; overflow: hidden; border-bottom: 1px solid #a8a8a8;
  background-image:
    repeating-linear-gradient(90deg, #999 0 1px, transparent 1px 10px),
    repeating-linear-gradient(90deg, #999 0 1px, transparent 1px 50px),
    repeating-linear-gradient(90deg, #999 0 1px, transparent 1px 100px);
  background-size: 100% 4px, 100% 9px, 100% 100%;
  background-position: 0 100%;
  background-repeat: no-repeat;
}
.hruler span { width: 100px; flex: none; padding-left: 2px; font-size: 10px; letter-spacing: -.8px; line-height: 12px; color: #555; }
.work { flex: 1; min-height: 0; display: grid; grid-template-columns: 15px 1fr 16px; grid-template-rows: 1fr 17px; }
.vruler { grid-column: 1; grid-row: 1 / span 2; overflow: hidden; display: flex; flex-direction: column; border-right: 1px solid #a8a8a8;
  background-image:
    repeating-linear-gradient(180deg, #999 0 1px, transparent 1px 10px),
    repeating-linear-gradient(180deg, #999 0 1px, transparent 1px 50px),
    repeating-linear-gradient(180deg, #999 0 1px, transparent 1px 100px);
  background-size: 4px 100%, 9px 100%, 100% 100%;
  background-position: 100% 0;
  background-repeat: no-repeat;
}
.vruler span { height: 100px; width: 12px; flex: none; writing-mode: vertical-rl; transform: rotate(180deg); font-size: 10px; letter-spacing: -.8px; line-height: 12px; color: #555; text-align: right; padding-bottom: 6px; display: block; }
.canvas { grid-column: 2; grid-row: 1; background: #fff; min-height: 0; overflow: hidden; color: #333; font-size: 13px; }
.mw-top { display: flex; width: 300px; height: 30px; box-shadow: 6px 6px 0 #e2e2e2; border: 1px solid #777; }
.mw-cell { flex: 1; display: flex; align-items: center; justify-content: center; border-right: 1px solid #777; }
.mw-cell:last-child { border-right: 0; }
.mw-sub { width: 100px; box-shadow: 6px 6px 0 #e2e2e2; position: relative; }
.mw-selected { height: 31px; background: #c0c0c0; border: 2px solid #3d97b2; border-bottom-style: dashed; border-right-style: dashed; }
.mw-item { height: 29.500px; display: flex; align-items: center; justify-content: center; background: #fff; border: 1px solid #777; border-top: 0; }

/* right */
.right { width: 269px; flex: none; border-left: 2px solid #b4b4b4; display: flex; flex-direction: column; background: #f2f2f2; font-size: 11px; }
.rname { height: 39px; flex: none; background: #fff; padding: 9px 0 0 10px; font-size: 16px; font-style: italic; color: #888; line-height: 20px; }
.rtabs { height: 27px; flex: none; display: grid; grid-template-columns: repeat(3, 1fr); gap: 1px; background: #f2f2f2; padding-top: 1px; }
.rtabs span { background: #d6d6d6; display: flex; align-items: center; justify-content: center; }
.rtabs .rtab-on { background: #1a9cd8; color: #cdeefb; }
.rbody { height: 360px; flex: none; display: flex; overflow: hidden; border-bottom: 2px solid #b4b4b4; }
.rlist { flex: 1; min-width: 0; }
.rsec { border-bottom: 1px solid #d2d2d2; }
.rsec-int { height: 226px; padding-top: 9px; }
.rhead { height: 20px; display: flex; align-items: center; padding-left: 9px; color: #333; }
.rhead svg { margin-right: 6px; }
.rlinks { display: flex; align-items: center; height: 20px; margin-top: 5px; padding-left: 12px; font-size: 12px; }
.rlink { color: #2a88ab; text-decoration: underline; }
.rlinks .rlink { margin-left: 7px; }
.rl-icon { margin-left: 38px; }
.rlinks .rl-icon + .rlink { margin-left: 6px; }
.events { list-style: none; margin: 9px 0 0; padding: 0 0 0 30px; color: #444; }
.events li { height: 21px; display: flex; align-items: center; gap: 9px; }
.rsec-link { height: 36px; display: flex; align-items: center; justify-content: space-between; padding: 0 10px 0 11px; }
.linkbtn { width: 24px; height: 20px; background: #d6d6d6; border: 1px solid #c6c6c6; display: flex; align-items: center; justify-content: center; }
.rsec-menu { height: 67px; padding-top: 8px; }
.badge { width: 14px; height: 14px; background: #c800a0; color: #f7c9ee; font-size: 11px; line-height: 14px; text-align: center; margin: 0 4px 0 -1px; flex: none; }
.rsec-menu .rhead svg, .rsec-item .rhead svg { margin-right: 7px; }
.rpad { display: flex; align-items: center; height: 20px; margin-top: 5px; padding-left: 10px; font-size: 12px; color: #333; gap: 12px; }
.rzero { font-size: 12px; }
.rsec-item { border-bottom: 0; padding-top: 6px; }
.phead-out { height: 25px; }
.outline { flex: 1; color: #444; margin-top: -1px; }
.out-row { height: 21px; display: flex; align-items: center; padding-left: 6px; gap: 8px; }
.out-row b { font-size: 12px; color: #333; }
.out-sub { padding-left: 20px; gap: 6px; }

/* overlays */
.topstrip { position: absolute; left: 1310px; top: -4px; width: 274px; height: 5px; background: #fff; box-shadow: 0 1px 2px #888; }
.widget { position: absolute; left: 0; top: 857px; width: 11px; height: 59px; background: #4a4d5e; border-radius: 0 3px 3px 0; padding: 6px 0 6px 2px; display: flex; flex-direction: column; }
.w-dark { width: 5px; height: 32px; background: repeating-linear-gradient(180deg, #2c2e3a 0 1px, transparent 1px 2.500px); }
.w-green { width: 5px; height: 15px; background: repeating-linear-gradient(180deg, #7fd8a8 0 1px, transparent 1px 2.500px); }

/* dialog */
.dialog { position: absolute; left: 800px; top: 212px; width: 352px; height: 690px; background: #f3f3f3; border: 1px solid #4a87a8; display: flex; flex-direction: column; font-size: 11px; color: #333; }
.dtitle { height: 30px; flex: none; background: #fff; display: flex; align-items: center; padding-left: 8px; font-size: 12px; color: #222; }
.dtitle span { margin-left: 5px; }
.dclose { margin-left: auto; margin-right: 10px; }
.dbody { flex: 1; display: flex; flex-direction: column; padding: 10px 10px 0; min-height: 0; }
.dtabs { height: 19px; flex: none; display: flex; gap: 1px; padding-left: 72px; background: linear-gradient(#aaa, #aaa) 0 50% / 100% 1px no-repeat; }
.dtabs span { display: flex; align-items: center; justify-content: center; background: #d2d2d2; }
.dtabs .dt-1 { width: 69px; background: #1a9cd8; color: #cdeefb; }
.dt-2 { width: 68px; }
.dt-3 { width: 46px; }
.dlist { height: 438px; flex: none; margin-top: 21px; background: #fff; border: 1px solid #c8c8c8; display: flex; overflow: hidden; }
.drows { flex: 1; min-width: 0; overflow: hidden; padding: 4px 0 0 8px; }
.drow { height: 28.150px; display: flex; align-items: center; }
.cb { width: 13px; height: 13px; flex: none; border: 1px solid #aaa; background: linear-gradient(135deg, #d0d0d0, #f4f4f4); display: flex; align-items: center; justify-content: center; }
.cb-on { background: #f4f4ff; }
.drow label { margin-left: 4px; width: 100px; flex: none; }
.dsel { width: 140px; height: 20px; background: #d2d2d2; border: 1px solid #c0c0c0; display: flex; align-items: center; justify-content: space-between; padding: 0 5px 0 2px; color: #999; font-size: 11.500px; }
.dsel-s { width: 45px; }
.dsel-in { margin-left: 6px; }
.ln { display: block; width: 116px; height: 1px; background: #222; margin-left: 3px; }
.dtog { width: 22px; height: 21px; flex: none; background: #c7ecfa; border: 1px solid #3e94ad; color: #c0d9e4; display: flex; align-items: center; justify-content: center; font-size: 13px; font-weight: bold; }
.dtog-i { font-style: italic; }
.hint { margin-left: 5px; color: #888; font-size: 12px; }
.dcol { width: 37px; height: 20px; flex: none; border: 1px solid #c4c4c4; background: #f0f0f0; display: flex; align-items: center; justify-content: space-between; padding: 0 3px 0 6px; }
.dcol-off { background: #d2d2d2; }
.dcol-pale { width: 39px; height: 21px; background: #f8f8f8; border-color: #e2e2e2; }
.dcol-pale .caret { border-top-color: #999; }
.a-small { border-bottom: 2px solid #bbb; font-size: 12px; line-height: 11px; color: #555; }
.dswatch { width: 13px; height: 13px; background: #c8c8c8; border: 1px solid #555; }
.drow-off label { color: #aaa; }
.drow-off .cb { background: #f2f2f2; border-color: #e2e2e2; }
.dinput { width: 30px; height: 20px; border: 1px solid #e0e0e0; background: #f8f8f8; color: #999; padding: 3px 2px; }
.apply { margin: 11px 2px 0; padding: 5px 0 0 12px; height: 87px; border: 1px solid #bdbdbd; flex: none; min-width: 0; font-size: 12px; }
.apply legend { padding: 0 3px 0 2px; margin-left: -9px; line-height: 14px; color: #222; }
.radio { height: 21px; display: flex; align-items: center; gap: 5px; color: #222; }
.rd { width: 13px; height: 13px; border-radius: 50%; border: 1px solid #a8a8a8; background: #f8f8f8; flex: none; }
.rd-on { border-color: #3c8fb0; background: radial-gradient(circle, #2b87ab 0 3.500px, #c7ecfa 4px); }
.rd-hover { border-color: #58b4d8; background: #c7ecfa; }
.preview { display: flex; align-items: center; gap: 7px; height: 16px; margin: 12px 0 0 2px; font-size: 12px; color: #222; }
.dbtns { display: flex; justify-content: flex-end; gap: 5px; margin: 14px 1px 0 0; }
.btn { width: 74px; height: 23px; font: 12px "Liberation Sans", "Noto Sans CJK SC", sans-serif; color: #222; border: 1px solid #999; border-radius: 2px; background: linear-gradient(180deg, #f4f4f4, #cfcfcf); padding: 0; }
.btn-on { border: 1px solid #3e8fae; box-shadow: inset 0 0 0 1px #a9e0f3; }
```
